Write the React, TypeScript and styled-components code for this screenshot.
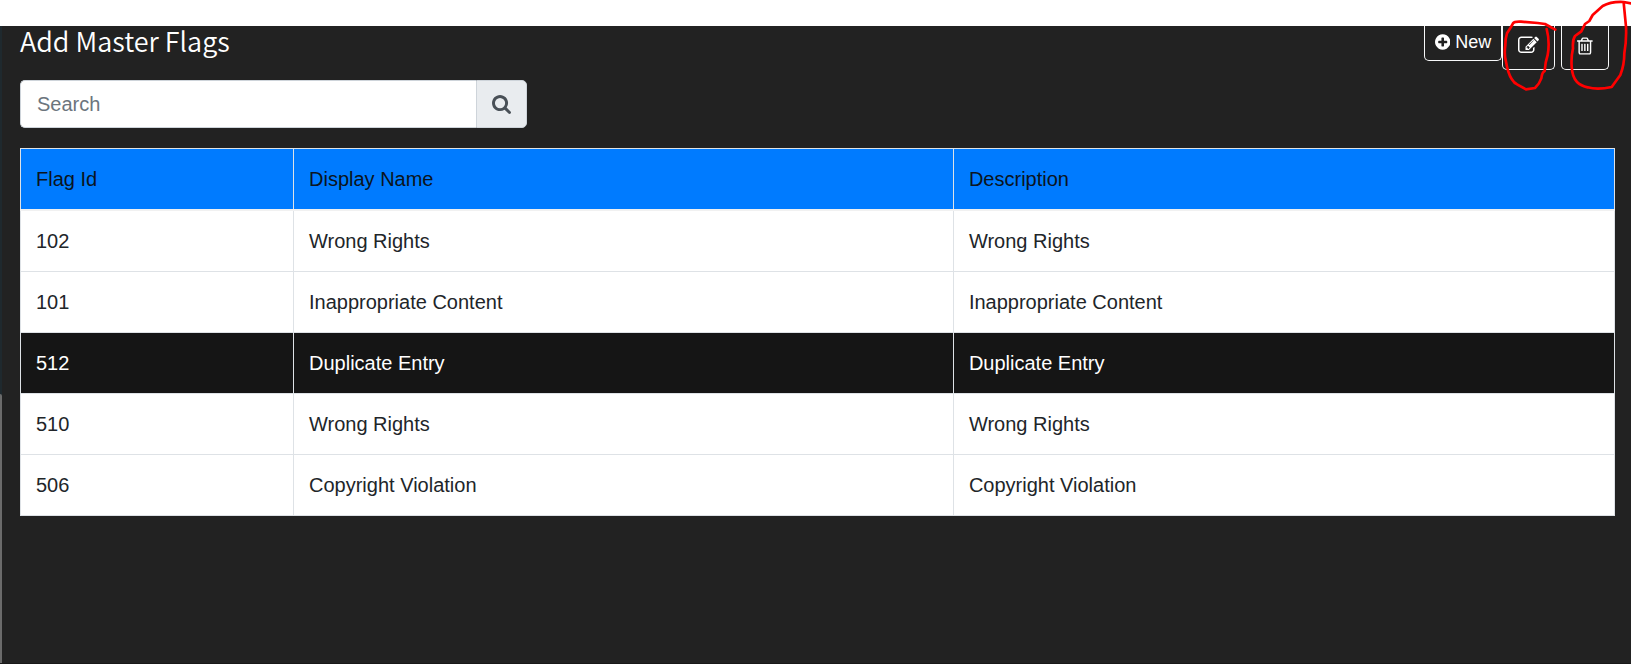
import React, { useState } from "react";
import styled, { createGlobalStyle } from "styled-components";

const GlobalStyle = createGlobalStyle`
  *, *::before, *::after { box-sizing: border-box; }
  body {
    margin: 0;
    background: #222222;
    font-family: "Liberation Sans", Arial, sans-serif;
    font-size: 20px;
    line-height: 28px;
    color: #212529;
  }
`;

const Page = styled.div`
  position: relative;
  display: flex;
  flex-direction: column;
  min-height: 100vh;
  overflow: hidden;
  background: #222222;
`;

const TopStrip = styled.div`
  height: 26px;
  background: #ffffff;
`;

const Body = styled.div`
  flex: 1;
  display: flex;
  border-bottom: 1px solid #191919;
`;

const Rail = styled.div`
  width: 2px;
  display: flex;
  flex-direction: column;
  background: #1f292e;
`;

const RailThumb = styled.div`
  flex: 1;
  margin-top: 368px;
  border-radius: 0 2px 0 0;
  background: #6b6b6b;
`;

const Content = styled.main`
  flex: 1;
  min-width: 0;
  padding: 0 16px 0 18px;
`;

const Header = styled.header`
  display: flex;
  justify-content: space-between;
  align-items: flex-start;
  height: 54px;
  padding-right: 6px;
`;

const Title = styled.h1`
  margin: 0;
  font-family: "Noto Sans CJK SC", "Noto Sans", sans-serif;
  font-size: 27px;
  font-weight: 350;
  line-height: 30px;
  color: #ffffff;
`;

const Actions = styled.div`
  display: flex;
  align-items: flex-start;
`;

const ActionButton = styled.button<{ $size: "small" | "large"; $gap?: boolean }>`
  display: flex;
  align-items: center;
  justify-content: center;
  gap: 5px;
  height: ${(p) => (p.$size === "small" ? 35 : 44)}px;
  padding: ${(p) => (p.$size === "small" ? "0 10px 2px" : "0 15px 4px")};
  margin-left: ${(p) => (p.$gap ? 6 : 0)}px;
  border: 1px solid #f8f9fa;
  border-top: 0;
  border-radius: 0 0 5px 5px;
  background: transparent;
  color: #ffffff;
  font-family: inherit;
  font-size: 18px;
  cursor: pointer;
`;

const Glyph = styled.svg<{ $size: number }>`
  display: block;
  height: ${(p) => p.$size}px;
  fill: currentColor;
`;

const SearchGroup = styled.form`
  display: flex;
  width: 32%;
  min-width: 240px;
  max-width: 507px;
  height: 48px;
  margin-bottom: 20px;
`;

const SearchInput = styled.input`
  flex: 1;
  min-width: 0;
  padding: 0 16px;
  border: 1px solid #ced4da;
  border-right: 0;
  border-radius: 5px 0 0 5px;
  background: #ffffff;
  color: #495057;
  font-family: inherit;
  font-size: 20px;
  outline: none;
  &::placeholder { color: #6c757d; opacity: 1; }
`;

const SearchButton = styled.button`
  display: flex;
  align-items: center;
  justify-content: center;
  width: 51px;
  padding: 0;
  border: 1px solid #ced4da;
  border-radius: 0 5px 5px 0;
  background: #e9ecef;
  color: #495057;
  cursor: pointer;
`;

const Table = styled.table`
  width: 100%;
  table-layout: fixed;
  border-collapse: collapse;
  background: #ffffff;
`;

const Column = styled.col<{ $width?: string }>`
  width: ${(p) => p.$width ?? "auto"};
`;

const HeadCell = styled.th`
  padding: 16px 15px;
  border: 1px solid #dee2e6;
  border-bottom: 2px solid #f1f1f1;
  background: #007bff;
  color: #0b1420;
  font-weight: 400;
  text-align: left;
`;

const Row = styled.tr<{ $selected: boolean }>`
  background: ${(p) => (p.$selected ? "#151515" : "#ffffff")};
  color: ${(p) => (p.$selected ? "#ffffff" : "#212529")};
  cursor: pointer;
`;

const Cell = styled.td`
  padding: 16px 15px;
  border: 1px solid #dee2e6;
`;

const Markup = styled.svg`
  position: absolute;
  top: 0;
  right: 0;
  width: 220px;
  height: 100px;
  fill: none;
  stroke: #ff0000;
  stroke-width: 8;
  stroke-linecap: round;
  stroke-linejoin: round;
  pointer-events: none;
`;

const paths = {
  plus: "M1344 960v-128q0-26-19-45t-45-19h-256v-256q0-26-19-45t-45-19h-128q-26 0-45 19t-19 45v256h-256q-26 0-45 19t-19 45v128q0 26 19 45t45 19h256v256q0 26 19 45t45 19h128q26 0 45-19t19-45v-256h256q26 0 45-19t19-45zm320-64q0 209-103 385.5t-279.5 279.5-385.5 103-385.5-103-279.5-279.5-103-385.5 103-385.5 279.5-279.5 385.5-103 385.5 103 279.5 279.5 103 385.5z",
  search: "M1216 832q0-185-131.5-316.5t-316.5-131.5-316.5 131.5-131.5 316.5 131.5 316.5 316.5 131.5 316.5-131.5 131.5-316.5zm512 832q0 52-38 90t-90 38q-54 0-90-38l-343-342q-179 124-399 124-143 0-273.5-55.5t-225-150-150-225-55.5-273.5 55.5-273.5 150-225 225-150 273.5-55.5 273.5 55.5 225 150 150 225 55.5 273.5q0 220-124 399l343 343q37 37 37 90z",
  edit: "M888 1184l116-116-152-152-116 116v56h96v96h56zm440-720q-16-16-33 1l-350 350q-17 17-1 33t33-1l350-350q17-17 1-33zm80 594v190q0 119-84.5 203.5t-203.5 84.5h-832q-119 0-203.5-84.5t-84.5-203.5v-832q0-119 84.5-203.5t203.5-84.5h832q63 0 117 25 15 7 18 23 3 17-9 29l-49 49q-14 14-32 8-23-6-45-6h-832q-66 0-113 47t-47 113v832q0 66 47 113t113 47h832q66 0 113-47t47-113v-126q0-13 9-22l64-64q15-15 35-7t20 29zm-96-738l288 288-672 672h-288v-288zm444 132l-92 92-288-288 92-92q28-28 68-28t68 28l152 152q28 28 28 68t-28 68z",
  trash: "M704 736v576q0 14-9 23t-23 9h-64q-14 0-23-9t-9-23v-576q0-14 9-23t23-9h64q14 0 23 9t9 23zm256 0v576q0 14-9 23t-23 9h-64q-14 0-23-9t-9-23v-576q0-14 9-23t23-9h64q14 0 23 9t9 23zm256 0v576q0 14-9 23t-23 9h-64q-14 0-23-9t-9-23v-576q0-14 9-23t23-9h64q14 0 23 9t9 23zm128 724v-948h-896v948q0 22 7 40.5t14.5 27 10.5 8.5h832q3 0 10.5-8.5t14.5-27 7-40.5zm-672-1076h448l-48-117q-7-9-17-11h-317q-10 2-17 11zm928 32v64q0 14-9 23t-23 9h-96v948q0 83-47 143.5t-113 60.5h-832q-66 0-113-58.5t-47-141.5v-952h-96q-14 0-23-9t-9-23v-64q0-14 9-23t23-9h309l70-167q15-37 54-63t79-26h320q40 0 79 26t54 63l70 167h309q14 0 23 9t9 23z",
};

const flags = [
  { id: "102", name: "Wrong Rights", description: "Wrong Rights" },
  { id: "101", name: "Inappropriate Content", description: "Inappropriate Content" },
  { id: "512", name: "Duplicate Entry", description: "Duplicate Entry" },
  { id: "510", name: "Wrong Rights", description: "Wrong Rights" },
  { id: "506", name: "Copyright Violation", description: "Copyright Violation" },
];

export default function App() {
  const [query, setQuery] = useState("");
  const [selected, setSelected] = useState("512");
  const visible = flags.filter((f) =>
    `${f.id} ${f.name} ${f.description}`.toLowerCase().includes(query.toLowerCase())
  );

  return (
    <>
      <GlobalStyle />
      <Page>
        <TopStrip />
        <Body>
          <Rail>
            <RailThumb />
          </Rail>
          <Content>
            <Header>
              <Title>Add Master Flags</Title>
              <Actions>
                <ActionButton type="button" $size="small">
                  <Glyph $size={18} viewBox="128 0 1536 1792" aria-hidden="true">
                    <path d={paths.plus} />
                  </Glyph>
                  New
                </ActionButton>
                <ActionButton type="button" $size="large" aria-label="Edit">
                  <Glyph $size={21} viewBox="0 0 1792 1792" aria-hidden="true">
                    <path d={paths.edit} />
                  </Glyph>
                </ActionButton>
                <ActionButton type="button" $size="large" $gap aria-label="Delete">
                  <Glyph $size={20} viewBox="192 0 1408 1792" aria-hidden="true">
                    <path d={paths.trash} />
                  </Glyph>
                </ActionButton>
              </Actions>
            </Header>
            <SearchGroup role="search" onSubmit={(e) => e.preventDefault()}>
              <SearchInput
                type="text"
                placeholder="Search"
                aria-label="Search"
                value={query}
                onChange={(e) => setQuery(e.target.value)}
              />
              <SearchButton type="submit" aria-label="Run search">
                <Glyph $size={19} viewBox="64 128 1664 1664" aria-hidden="true">
                  <path d={paths.search} />
                </Glyph>
              </SearchButton>
            </SearchGroup>
            <Table>
              <colgroup>
                <Column $width="273px" />
                <Column $width="41.4%" />
                <Column />
              </colgroup>
              <thead>
                <tr>
                  <HeadCell scope="col">Flag Id</HeadCell>
                  <HeadCell scope="col">Display Name</HeadCell>
                  <HeadCell scope="col">Description</HeadCell>
                </tr>
              </thead>
              <tbody>
                {visible.map((f) => (
                  <Row key={f.id} $selected={f.id === selected} onClick={() => setSelected(f.id)}>
                    <Cell>{f.id}</Cell>
                    <Cell>{f.name}</Cell>
                    <Cell>{f.description}</Cell>
                  </Row>
                ))}
              </tbody>
            </Table>
          </Content>
        </Body>
        <Markup viewBox="0 0 660 300" aria-hidden="true">
          <path d="M433 89 L402 72 L380 69 L330 65 Q310 64 306 70 L300 81 L288 100 Q283 115 283 135 Q279 165 285 185 Q291 220 302 237 Q310 250 318 253 L345 268 L372 264 Q385 252 391 235 Q393 217 401 213 Q403 185 410 165 Q417 125 407 87" />
          <path d="M660 10 L638 6 Q600 4 575 18 L545 45 L535 63 L522 72 L511 94 L492 108 Q484 120 486 145 Q480 170 482 200 Q484 232 498 246 Q510 258 530 262 Q560 270 602 261 L628 225 Q640 195 640 160 Q647 120 645 80 L638 8" />
        </Markup>
      </Page>
    </>
  );
}
